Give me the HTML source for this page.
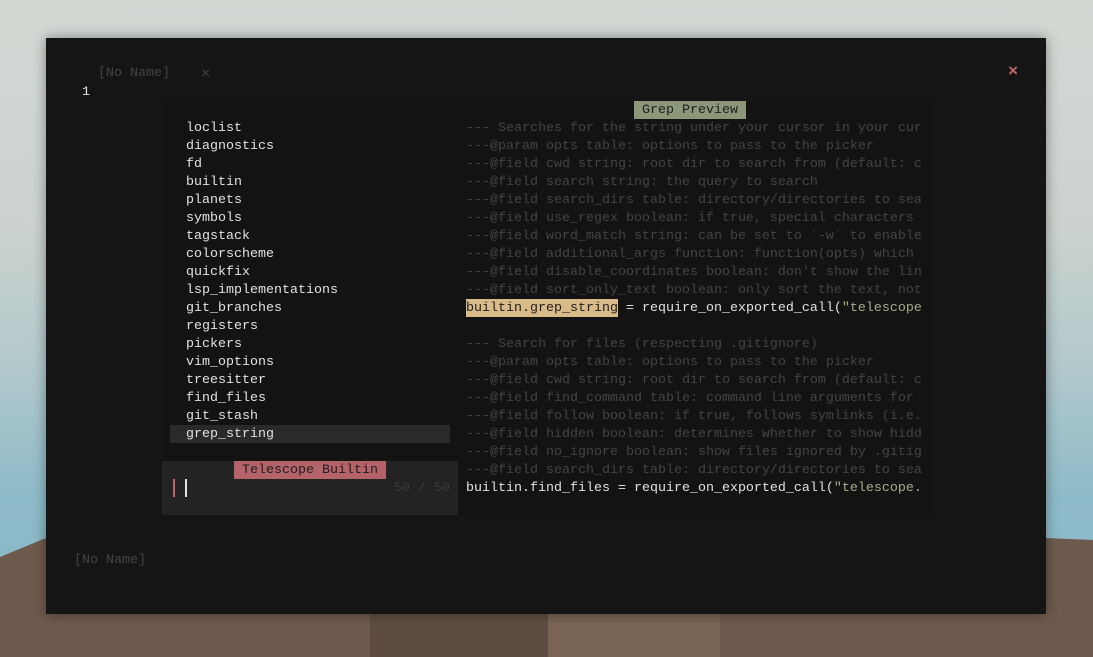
<!DOCTYPE html>
<html><head><meta charset="utf-8"><style>
*{margin:0;padding:0;box-sizing:border-box}
html,body{width:1093px;height:657px;overflow:hidden}
body{position:relative;background:linear-gradient(180deg,#d3d8d3 0%,#cbd2ce 35%,#b3c9cc 55%,#8fbbc9 75%,#86b6c7 100%);font-family:"Liberation Mono",monospace;font-size:13.33px}
.bg{position:absolute;left:0;top:0}
.win{position:absolute;left:46px;top:38px;width:1000px;height:576px;background:#151515;box-shadow:0 0 12px rgba(0,0,0,.4)}
.t{position:absolute;white-space:pre;line-height:18px}
.res{position:absolute;left:162px;top:101px;width:296px;height:360px;background:#131313}
.prev{position:absolute;left:458px;top:101px;width:472px;height:414px;background:#131313}
.prm{position:absolute;left:162px;top:461px;width:296px;height:54px;background:#232323}
.c{color:#444}.w{color:#e2e2e2}.s{color:#a6ad8a}
</style></head><body>
<svg class="bg" width="1093" height="657">
<polygon points="0,557 46,538 1046,538 1093,540 1093,657 0,657" fill="#6e5a4c"/>
<polygon points="370,614 548,614 548,657 370,657" fill="#5e4c40"/>
<polygon points="548,614 720,614 720,657 548,657" fill="#7a6453"/>
</svg>
<div class="win"></div>
<div class="t c" style="left:98px;top:65px">[No Name]</div>
<div class="t c" style="left:201px;top:65px;font-size:16px">×</div>
<div class="t" style="left:1008px;top:64px;color:#c2636a;font-weight:bold;font-size:17px">×</div>
<div class="t w" style="left:82px;top:84px">1</div>
<div class="t c" style="left:74px;top:552px">[No Name]</div>
<div class="res"></div>
<div class="prev"></div>
<div class="prm"></div>
<div style="position:absolute;left:170px;top:425px;width:280px;height:18px;background:#2a2a2a"></div>
<div class="t w" style="left:186px;top:120px">loclist
diagnostics
fd
builtin
planets
symbols
tagstack
colorscheme
quickfix
lsp_implementations
git_branches
registers
pickers
vim_options
treesitter
find_files
git_stash
grep_string</div>
<div class="t" style="left:634px;top:101px;height:18px;background:#8c977a;color:#1e1e1e;padding:2px 8px 0;line-height:16px">Grep Preview</div>
<div class="t" style="left:234px;top:461px;height:18px;background:#b5636a;color:#1e1e1e;padding:2px 8px 0;line-height:16px">Telescope Builtin</div>
<div style="position:absolute;left:173px;top:479px;width:2px;height:18px;background:#c2636a"></div>
<div style="position:absolute;left:185px;top:479px;width:2px;height:18px;background:#e2e2e2"></div>
<div class="t" style="left:394px;top:480px;color:#3a3a3a">50 / 50</div>
<div class="t c" style="left:466px;top:120px;width:456px;overflow:hidden">--- Searches for the string under your cursor in your cur
---@param opts table: options to pass to the picker
---@field cwd string: root dir to search from (default: c
---@field search string: the query to search
---@field search_dirs table: directory/directories to sea
---@field use_regex boolean: if true, special characters
---@field word_match string: can be set to `-w` to enable
---@field additional_args function: function(opts) which
---@field disable_coordinates boolean: don't show the lin
---@field sort_only_text boolean: only sort the text, not</div>
<div style="position:absolute;left:466px;top:299px;width:152px;height:18px;background:#d9bb8a"></div>
<div class="t w" style="left:466px;top:300px"><span style="color:#1e1e1e">builtin.grep_string</span> = require_on_exported_call(<span class="s">"telescope</span></div>
<div class="t c" style="left:466px;top:336px;width:456px;overflow:hidden">--- Search for files (respecting .gitignore)
---@param opts table: options to pass to the picker
---@field cwd string: root dir to search from (default: c
---@field find_command table: command line arguments for
---@field follow boolean: if true, follows symlinks (i.e.
---@field hidden boolean: determines whether to show hidd
---@field no_ignore boolean: show files ignored by .gitig
---@field search_dirs table: directory/directories to sea</div>
<div class="t w" style="left:466px;top:480px">builtin.find_files = require_on_exported_call(<span class="s">"telescope.</span></div>
</body></html>
